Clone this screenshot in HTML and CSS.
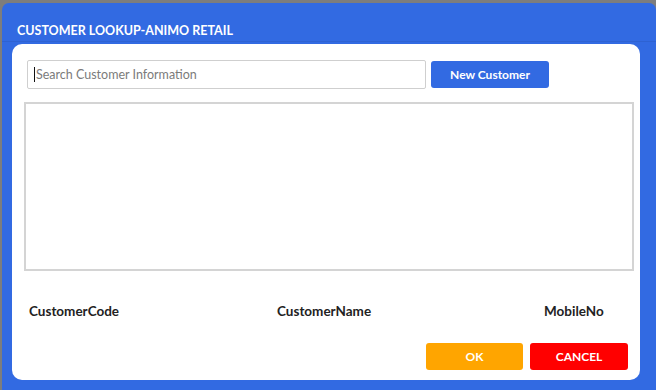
FILE: index.html
```html
<!DOCTYPE html>
<html lang="en">
<head>
  <meta charset="UTF-8">
  <title>Customer Lookup</title>
  <link rel="stylesheet" href="styles.css">
</head>
<body>
  <div class="window">
    <div class="titlebar">CUSTOMER LOOKUP-ANIMO RETAIL</div>

    <div class="panel">
      <div class="search-row">
        <div class="search-wrap">
          <span class="caret"></span>
          <input class="search" type="text" placeholder="Search Customer Information">
        </div>
        <button class="btn btn-blue">New Customer</button>
      </div>

      <div class="grid-box"></div>

      <div class="columns">
        <span class="col col-code">CustomerCode</span>
        <span class="col col-name">CustomerName</span>
        <span class="col col-mobile">MobileNo</span>
      </div>

      <div class="actions">
        <button class="btn btn-ok">OK</button>
        <button class="btn btn-cancel">CANCEL</button>
      </div>
    </div>
  </div>
</body>
</html>
```

FILE: styles.css
```css
body {
  margin: 0;
  padding: 0;
  background: #7d7d7d;
  font-family: 'Lato', 'Open Sans', sans-serif;
  overflow: hidden;
}

.window {
  margin: 3px 0 0 2px;
  height: 387px;
  background: #326ae2;
  border-radius: 7px 7px 0 0;
  display: flex;
  flex-direction: column;
}

.titlebar {
  box-sizing: border-box;
  height: 39px;
  padding: 0 0 3px 15px;
  display: flex;
  align-items: flex-end;
  color: #fff;
  font-weight: 700;
  font-size: 12.5px;
  border-bottom: 1px solid #2e62d2;
}

.panel {
  margin: 2px 16px 0 10px;
  height: 336px;
  background: #fff;
  border-radius: 10px;
  display: flex;
  flex-direction: column;
}

.search-row {
  display: flex;
  align-items: center;
  gap: 5px;
  margin: 16px 0 0 15px;
  height: 29px;
}

.search-wrap {
  position: relative;
}

/* text cursor of the focused box */
.caret {
  position: absolute;
  left: 7px;
  top: 7px;
  width: 1px;
  height: 15px;
  background: #111;
}

.search {
  box-sizing: border-box;
  width: 399px;
  height: 29px;
  border: 1px solid #cfcfcf;
  border-radius: 2px;
  padding: 0 8px;
  font-family: inherit;
  font-size: 12.5px;
  color: #333;
  outline: none;
}

.search::placeholder {
  color: #7b7b7b;
}

.btn {
  border: none;
  border-radius: 3px;
  color: #fff;
  font-family: inherit;
  font-weight: 700;
  font-size: 12px;
  height: 27px;
  cursor: pointer;
}

.btn-blue {
  width: 118px;
  background: #326ae2;
}

.grid-box {
  box-sizing: border-box;
  margin: 13px 0 0 12px;
  width: 610px;
  height: 169px;
  border: 2px solid #d4d4d4;
}

.columns {
  display: flex;
  margin-top: 30px;
  height: 20px;
  align-items: center;
  font-weight: 700;
  font-size: 13.5px;
  color: #222;
}

.col-code {
  margin-left: 17px;
  width: 248px;
}

.col-name {
  width: 267px;
}

.actions {
  display: flex;
  justify-content: flex-end;
  gap: 7px;
  margin: 22px 12px 0 0;
}

.btn-ok {
  width: 97px;
  background: #ffa500;
}

.btn-cancel {
  width: 98px;
  background: #ff0000;
}
```
